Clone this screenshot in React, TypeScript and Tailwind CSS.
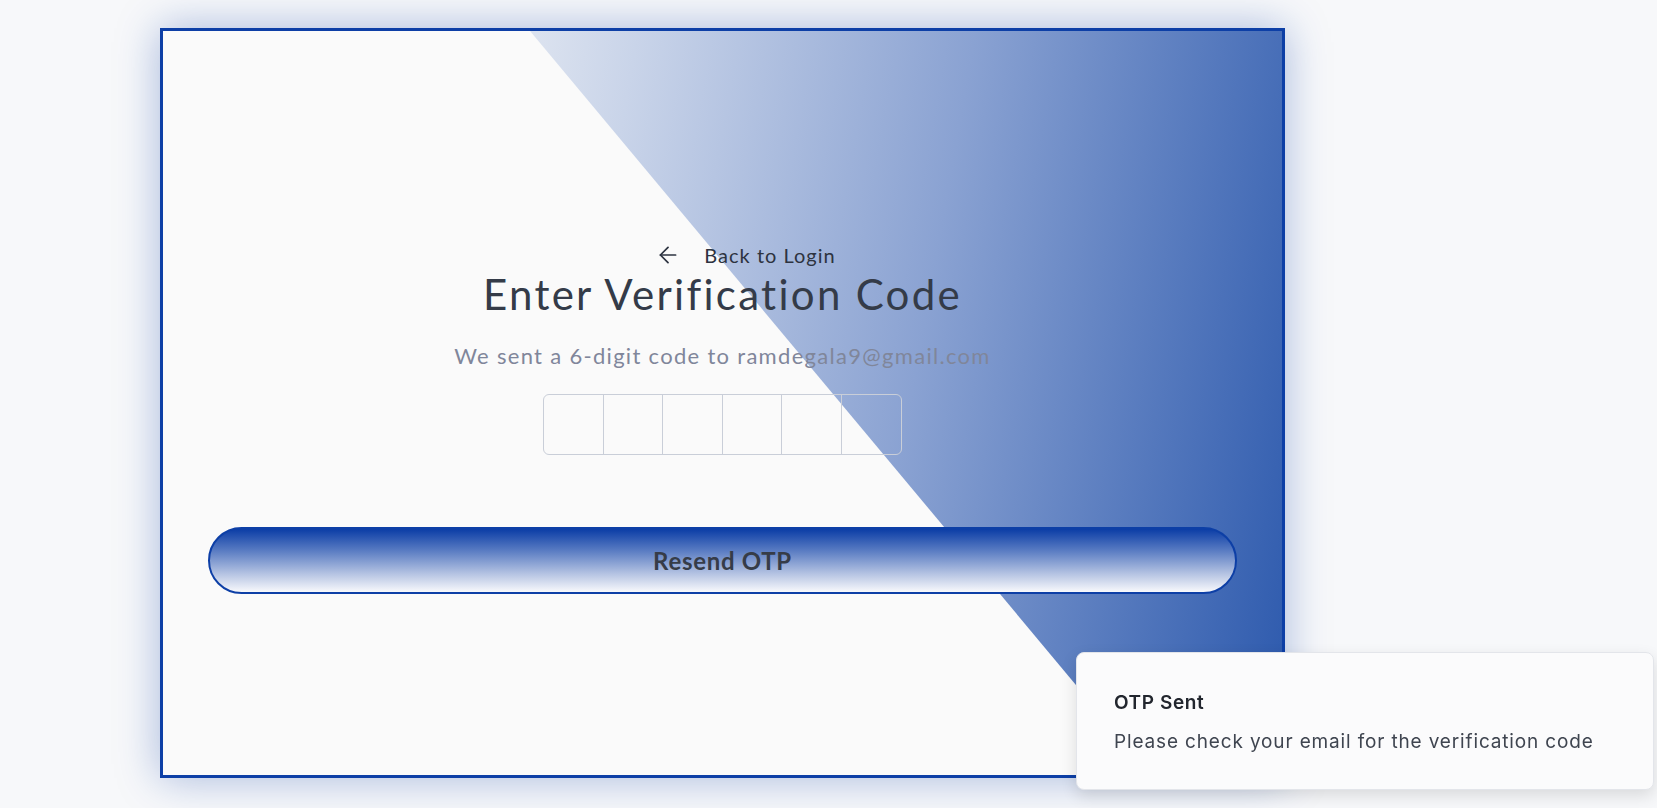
import { ArrowLeft } from 'lucide-react'

const DIGITS = [0, 1, 2, 3, 4, 5]

export default function App() {
    return (
        <div className="min-h-[808px] w-full bg-[#f7f8fa] pl-[160px] pt-[28px] font-['Lato',sans-serif]">
            {/* card */}
            <div className="relative w-[1125px] h-[750px] border-[3px] border-[#0d3fa6] bg-[#fafafa] shadow-[0_0_40px_rgba(13,63,166,0.35)] overflow-hidden">
                <div className="absolute inset-0 [clip-path:polygon(32.8%_0,100%_0,100%_100%,88.3%_100%)] bg-[linear-gradient(100deg,#dbe2ef_30%,#c9d4e9_38%,#8aa2d2_65%,#2c59ad_100%)]" />

                <div className="relative flex flex-col items-center pt-[209px] px-[45px]">
                    <button className="ml-[46px] flex items-center gap-[23px] text-[20px] tracking-[1px] text-[#2d3340]">
                        <ArrowLeft className="w-[26px] h-[26px]" strokeWidth={1.6} />
                        <span>Back to Login</span>
                    </button>

                    <h1 className="-mt-[1px] text-[42px] leading-[50px] tracking-[2.3px] text-[#343b48]">Enter Verification Code</h1>

                    <p className="mt-[20px] text-[22px] tracking-[1.3px] text-[#80869a]">We sent a 6-digit code to ramdegala9@gmail.com</p>

                    <div className="mt-[22px] flex rounded-md border border-[#c9ced8]">
                        {DIGITS.map((d) => (
                            <input
                                key={d}
                                maxLength={1}
                                className={`w-[59.5px] h-[59px] bg-transparent text-center text-2xl outline-none ${d < 5 ? 'border-r border-[#c9ced8]' : ''}`}
                            />
                        ))}
                    </div>

                    <button className="mt-[72px] w-full h-[67px] rounded-full border-2 border-[#0d3fa6] bg-[linear-gradient(180deg,#0b3da6_0%,#5b7dc3_35%,#b7c5e3_72%,#f8f9fc_100%)] text-[24px] font-bold tracking-[0.7px] text-[#363c48]">
                        Resend OTP
                    </button>
                </div>
            </div>

            {/* toast */}
            <div className="fixed right-[3px] bottom-[18px] w-[578px] h-[138px] rounded-lg border border-[#e3e5ea] bg-[#fbfbfc] shadow-[0_6px_16px_rgba(0,0,0,0.12)] pl-[37px] pt-[36px] font-['Inter',sans-serif]">
                <div className="text-[19px] font-semibold tracking-[0.6px] text-[#22262e]">OTP Sent</div>
                <div className="mt-[10px] text-[19px] tracking-[0.85px] text-[#3f4550]">Please check your email for the verification code</div>
            </div>
        </div>
    )
}
